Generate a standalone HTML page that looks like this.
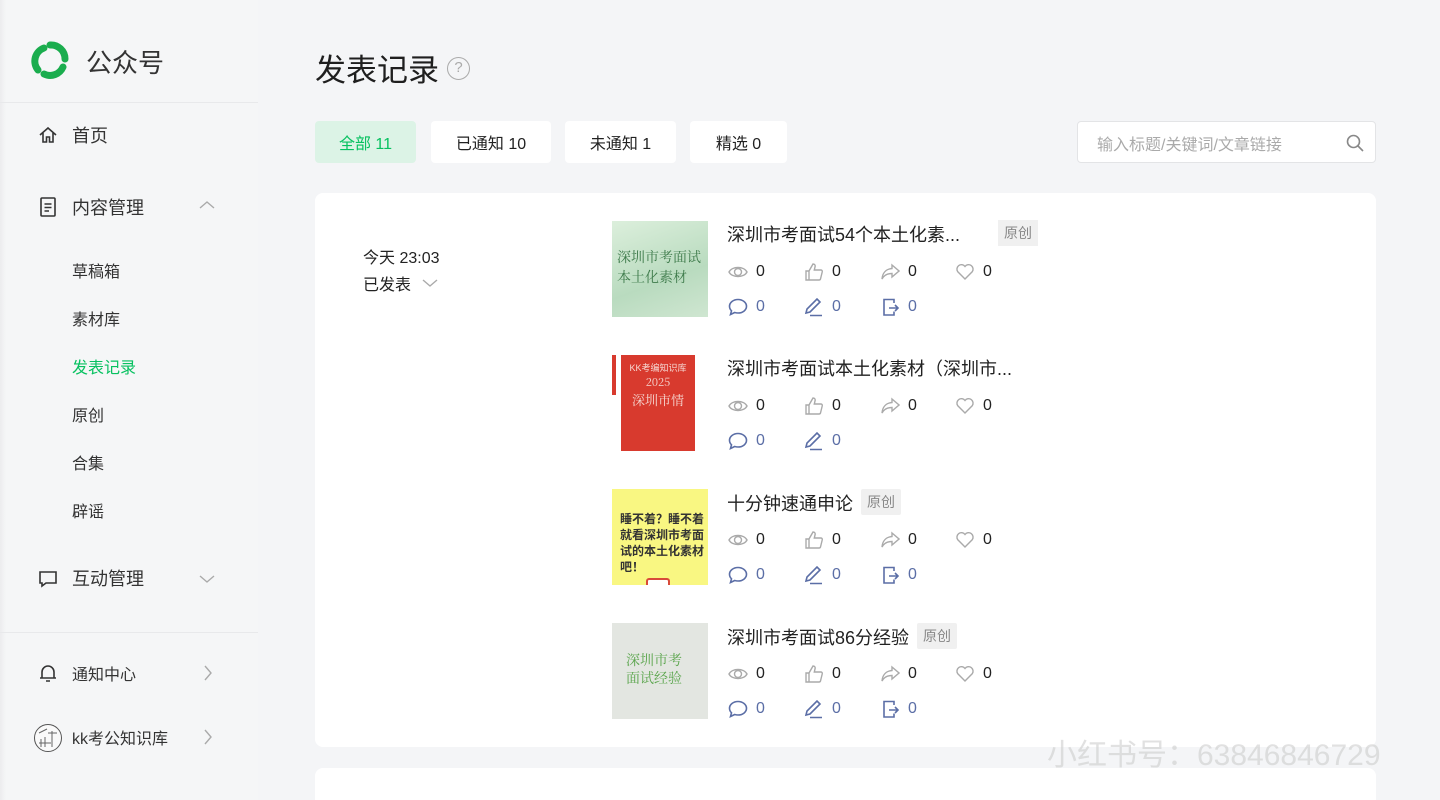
<!DOCTYPE html>
<html><head><meta charset="utf-8"><style>
*{margin:0;padding:0;box-sizing:border-box}
html{overflow:hidden;width:1440px;height:800px}
body{width:1440px;height:800px;overflow:hidden;background:#f4f5f7;font-family:"Liberation Sans","Noto Sans CJK SC",sans-serif;color:#1f1f1f;position:relative}
.abs{position:absolute}
.side{left:0;top:0;width:258px;height:800px;background:#f5f6f7}
.hr{height:1px;background:#e8e9eb}
.nav{font-size:18px;color:#333}
.sub{font-size:16px;color:#333}
.tab{position:absolute;top:121px;height:42px;border-radius:4px;background:#fff;font-size:16px;color:#222;display:flex;align-items:center;justify-content:center}
.card{background:#fff;border-radius:8px}
.title{font-size:18px;color:#222;white-space:nowrap}
.tag{display:inline-block;background:#f0f0f0;color:#888;font-size:14px;padding:3px 6px;border-radius:2px;margin-left:8px;vertical-align:3px}
.st{position:absolute;font-size:16px;display:flex;align-items:center;gap:8px}
.st svg{width:20px;height:20px}
.g{color:#222}.b{color:#5b6ea6}
</style></head><body>
<div class="abs side"></div>
<div class="abs" style="left:0;top:0;width:6px;height:800px;background:linear-gradient(90deg,#ececee,#f5f6f7)"></div>
<svg class="abs" style="left:30px;top:40px" width="40" height="40" viewBox="0 0 40 40"><g fill="none" stroke="#1aad4e" stroke-width="7" stroke-linecap="round"><path d="M8 30 A14 14 0 0 1 14 8"/><path d="M20 5 A14 14 0 0 1 35 19"/><path d="M33 27 A14 14 0 0 1 14 34"/></g></svg>
<div class="abs" style="left:86px;top:43px;font-size:26px;color:#333">公众号</div>
<div class="abs hr" style="left:0;top:102px;width:258px"></div>
<svg class="abs" style="left:38px;top:125px" width="20" height="20" viewBox="0 0 20 20" fill="none" stroke="#333" stroke-width="1.6"><path d="M2 10 L10 3 L18 10 M5 8 V17 H8.5 V12 H11.5 V17 H15 V8"/></svg>
<div class="abs nav" style="left:72px;top:122px">首页</div>
<svg class="abs" style="left:38px;top:196px" width="20" height="22" viewBox="0 0 20 22" fill="none" stroke="#333" stroke-width="1.6"><rect x="3" y="2" width="14" height="18" rx="1"/><path d="M6.5 8H13.5M6.5 11.5H13.5M6.5 15H11"/></svg>
<div class="abs nav" style="left:72px;top:194px">内容管理</div>
<svg class="abs" style="left:199px;top:200px" width="16" height="10" viewBox="0 0 16 10" fill="none" stroke="#aaa" stroke-width="1.4"><path d="M1 8L8 2L15 8"/></svg>
<div class="abs sub" style="left:72px;top:258px">草稿箱</div>
<div class="abs sub" style="left:72px;top:306px">素材库</div>
<div class="abs sub" style="left:72px;top:354px;color:#07c160">发表记录</div>
<div class="abs sub" style="left:72px;top:402px">原创</div>
<div class="abs sub" style="left:72px;top:450px">合集</div>
<div class="abs sub" style="left:72px;top:498px">辟谣</div>
<svg class="abs" style="left:38px;top:569px" width="20" height="20" viewBox="0 0 20 20" fill="none" stroke="#333" stroke-width="1.6"><path d="M2 3H18V14H8L4 17V14H2Z"/></svg>
<div class="abs nav" style="left:72px;top:565px">互动管理</div>
<svg class="abs" style="left:199px;top:574px" width="16" height="10" viewBox="0 0 16 10" fill="none" stroke="#aaa" stroke-width="1.4"><path d="M1 2L8 8L15 2"/></svg>
<div class="abs hr" style="left:0;top:632px;width:258px"></div>
<svg class="abs" style="left:38px;top:662px" width="20" height="22" viewBox="0 0 20 22" fill="none" stroke="#333" stroke-width="1.6"><path d="M4 16V10A6 6 0 0 1 16 10V16H18H2H4M8 19H12"/></svg>
<div class="abs sub" style="left:72px;top:661px">通知中心</div>
<svg class="abs" style="left:203px;top:665px" width="10" height="16" viewBox="0 0 10 16" fill="none" stroke="#aaa" stroke-width="1.4"><path d="M2 1L8 8L2 15"/></svg>
<div class="abs" style="left:34px;top:724px;width:28px;height:28px;border-radius:50%;border:1.5px solid #555;background:#fafafa"><svg width="26" height="26" viewBox="0 0 26 26" fill="none" stroke="#666" stroke-width="1"><path d="M4 18H16M6 14V22M10 12V22M13 8H22M17 6V22M4 8L12 4"/></svg></div>
<div class="abs sub" style="left:72px;top:725px">kk考公知识库</div>
<svg class="abs" style="left:203px;top:729px" width="10" height="16" viewBox="0 0 10 16" fill="none" stroke="#aaa" stroke-width="1.4"><path d="M2 1L8 8L2 15"/></svg>

<div class="abs" style="left:315px;top:45px;font-size:31px;color:#1f1f1f">发表记录</div>
<div class="abs" style="left:447px;top:57px;width:23px;height:23px;border-radius:50%;border:1.5px solid #aaa;color:#aaa;font-size:15px;text-align:center;line-height:20px">?</div>
<div class="tab" style="left:315px;width:101px;background:#dcf3e6;color:#07c160">全部 11</div>
<div class="tab" style="left:431px;width:120px">已通知 10</div>
<div class="tab" style="left:565px;width:111px">未通知 1</div>
<div class="tab" style="left:690px;width:97px">精选 0</div>
<div class="abs" style="left:1077px;top:121px;width:299px;height:42px;background:#fff;border:1px solid #e3e4e6;border-radius:4px;font-size:16px;color:#aaa;padding:9px 19px">输入标题/关键词/文章链接</div>
<svg class="abs" style="left:1345px;top:133px" width="20" height="20" viewBox="0 0 20 20" fill="none" stroke="#888" stroke-width="1.6"><circle cx="8.5" cy="8.5" r="6"/><path d="M13 13L18 18"/></svg>

<div class="abs card" style="left:315px;top:193px;width:1061px;height:554px"></div>
<div class="abs card" style="left:315px;top:768px;width:1061px;height:40px"></div>
<div class="abs" style="left:363px;top:244px;font-size:16px;color:#222">今天 23:03</div>
<div class="abs" style="left:363px;top:271px;font-size:16px;color:#222">已发表</div>
<svg class="abs" style="left:422px;top:278px" width="16" height="10" viewBox="0 0 16 10" fill="none" stroke="#aaa" stroke-width="1.4"><path d="M1 2L8 8L15 2"/></svg>

<div class="abs" style="left:612px;top:221px;width:96px;height:96px;background:linear-gradient(160deg,#dcefdc,#b9dbbf 60%,#cfe6d1);color:#3d7a4a;font-family:'Noto Serif CJK SC',serif;font-size:14px;line-height:20px;padding:26px 4px 0 5px">深圳市考面试<br>本土化素材</div>
<div class="abs" style="left:612px;top:355px;width:4px;height:40px;background:#d83a2e"></div>
<div class="abs" style="left:621px;top:355px;width:74px;height:96px;background:#d83a2e;color:#f6d8d2;text-align:center;font-size:9px;padding-top:6px;line-height:14px">KK考编知识库<br><span style="font-size:11px;font-family:'Noto Serif CJK SC',serif">2025</span><br><span style="font-size:13px;font-family:'Noto Serif CJK SC',serif;line-height:20px">深圳市情</span></div>
<div class="abs" style="left:612px;top:489px;width:96px;height:96px;background:#f9f782;font-weight:bold;font-size:12px;line-height:16px;color:#333;padding:22px 4px 0 8px">睡不着？睡不着就看深圳市考面试的本土化素材吧！</div>
<div class="abs" style="left:646px;top:578px;width:24px;height:7px;border:2px solid #d84a3a;border-bottom:none;border-radius:3px 3px 0 0;background:#fff"></div>
<div class="abs" style="left:612px;top:623px;width:96px;height:96px;background:#e3e6e1;color:#5aa54c;font-family:'Noto Serif CJK SC',serif;font-size:14px;line-height:18px;padding:28px 0 0 14px">深圳市考<br>面试经验</div>

<div class="abs title" style="left:727px;top:221px">深圳市考面试54个本土化素...</div>
<div class="abs" style="left:998px;top:220px;background:#f0f0f0;color:#888;font-size:14px;padding:3px 6px">原创</div>
<div class="abs title" style="left:727px;top:355px">深圳市考面试本土化素材（深圳市...</div>
<div class="abs title" style="left:727px;top:489px">十分钟速通申论<span class="tag">原创</span></div>
<div class="abs title" style="left:727px;top:623px">深圳市考面试86分经验<span class="tag">原创</span></div>

<div id="stats"></div>
<script>
const eye='<svg viewBox="0 0 20 20" fill="none" stroke="#aaa" stroke-width="1.4"><path d="M1 10C4 4 16 4 19 10C16 16 4 16 1 10Z"/><circle cx="10" cy="10" r="3.5"/></svg>';
const like='<svg viewBox="0 0 20 20" fill="none" stroke="#aaa" stroke-width="1.4"><path d="M2 9H5V18H2ZM5 9L9 2C11 2 11.5 3.5 11 5L10.3 8H17C18 8 18.5 9 18.2 10L16.5 17C16.3 17.7 15.8 18 15 18H5"/></svg>';
const share='<svg viewBox="0 0 20 20" fill="none" stroke="#aaa" stroke-width="1.4"><path d="M12 3L19 9L12 15V11.5C7 11.5 4 13 2 17C2.5 11 6 7 12 6.5Z"/></svg>';
const heart='<svg viewBox="0 0 20 20" fill="none" stroke="#aaa" stroke-width="1.4"><path d="M10 17L2.8 9.8A4.3 4.3 0 0 1 10 4.5A4.3 4.3 0 0 1 17.2 9.8Z"/></svg>';
const cm='<svg viewBox="0 0 20 20" fill="none" stroke="#5b6ea6" stroke-width="1.6"><path d="M10 2.5C14.7 2.5 18.5 5.5 18.5 9.3S14.7 16 10 16C8.8 16 7.7 15.8 6.7 15.5L2.5 17.5L3.5 13.8C2.2 12.6 1.5 11 1.5 9.3C1.5 5.5 5.3 2.5 10 2.5Z"/></svg>';
const pen='<svg viewBox="0 0 20 20" fill="none" stroke="#5b6ea6" stroke-width="1.6"><path d="M2 16L3 12L13 2L16 5L6 15ZM6 18.5H18"/></svg>';
const out='<svg viewBox="0 0 20 20" fill="none" stroke="#5b6ea6" stroke-width="1.6"><path d="M14 6V2.5H4V18H14V14.5M9 11H18M15 8L18 11L15 14"/></svg>';
let h='';
[270,404,538,672].forEach((y,i)=>{
 [[728,eye],[804,like],[880,share],[955,heart]].forEach(([x,ic])=>{h+=`<div class="st g" style="left:${x}px;top:${y-8}px">${ic}<span>0</span></div>`});
 const r2=i==1?[[728,cm],[804,pen]]:[[728,cm],[804,pen],[880,out]];
 r2.forEach(([x,ic])=>{h+=`<div class="st b" style="left:${x}px;top:${y+27}px">${ic}<span>0</span></div>`});
});
document.getElementById('stats').innerHTML=h;
</script>
<div class="abs" style="left:1047px;top:730px;font-size:30px;color:rgba(200,200,200,0.55)">小红书号：63846846729</div>
</body></html>
